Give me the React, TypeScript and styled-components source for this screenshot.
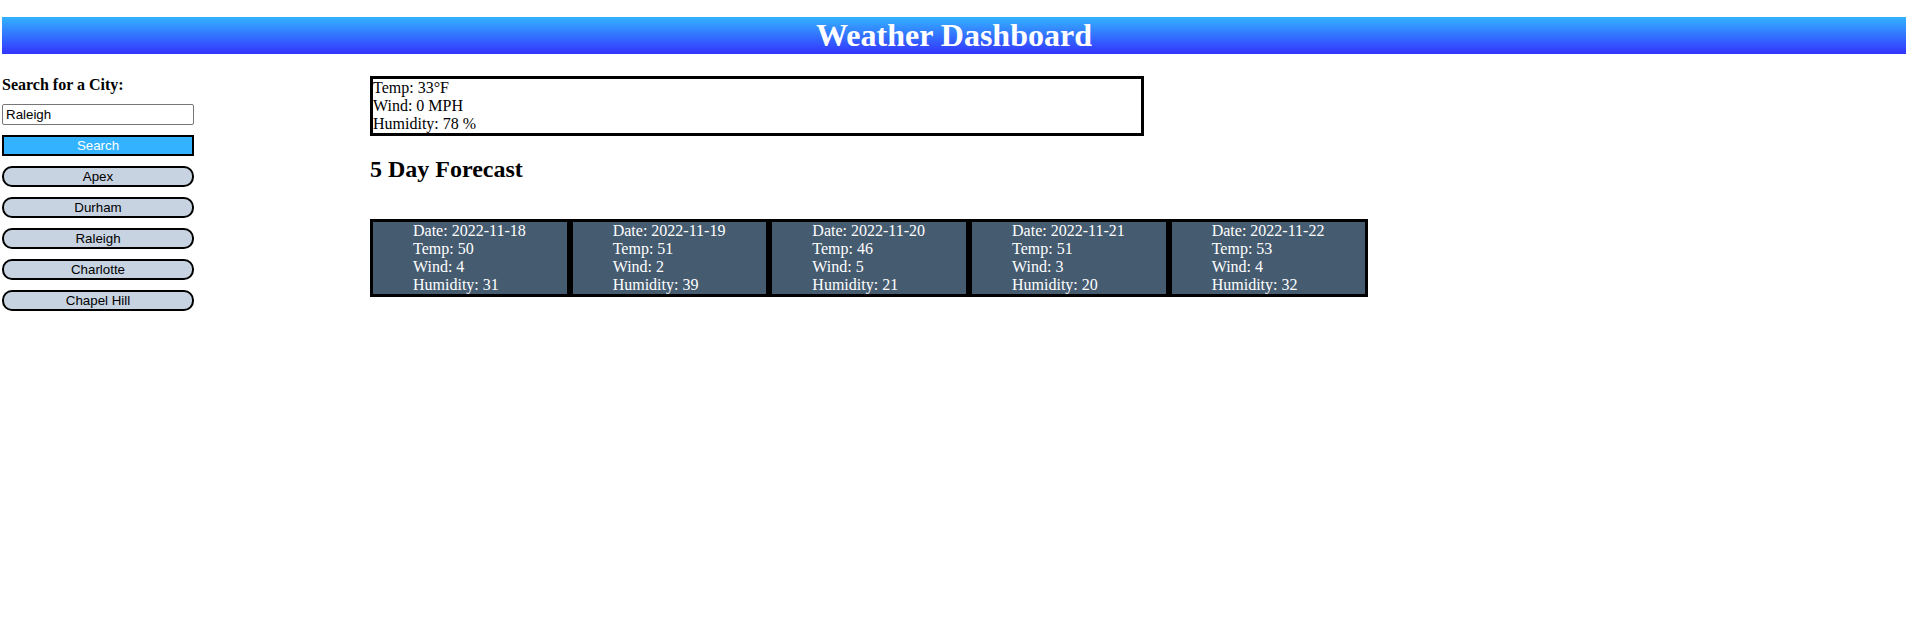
import React, { useState } from "react";
import styled, { createGlobalStyle } from "styled-components";

const GlobalStyle = createGlobalStyle`
  * {
    box-sizing: border-box;
  }
  body {
    margin: 17px 6px 0 2px;
    background: #ffffff;
    color: #000000;
    font: 16px/18px "Liberation Serif", "Times New Roman", serif;
  }
`;

const Title = styled.h1`
  margin: 0;
  font-size: 32px;
  line-height: 37px;
  text-align: center;
  color: #ffffff;
  background: linear-gradient(#33b3ff, #3333ff);
`;

const Columns = styled.div`
  display: grid;
  grid-template-columns: 192px 1fr;
  column-gap: 176px;
  align-items: start;
  margin-top: 22px;
`;

const SearchForm = styled.form`
  display: grid;
  gap: 10px;
`;

const SearchLabel = styled.label`
  font-weight: bold;
`;

const CityInput = styled.input`
  width: 100%;
  height: 21px;
  padding: 1px 3px;
  border: 1px solid #767676;
  border-radius: 2px;
  font-family: "Liberation Sans", Arial, sans-serif;
`;

const CityButton = styled.button<{ $primary?: boolean }>`
  height: 21px;
  padding: 0 6px;
  border: 2px solid #000000;
  border-radius: ${(p) => (p.$primary ? "0" : "10px")};
  background: ${(p) => (p.$primary ? "#33b3ff" : "#c7d3e1")};
  color: ${(p) => (p.$primary ? "#ffffff" : "#000000")};
  font-family: "Liberation Sans", Arial, sans-serif;
  cursor: pointer;
`;

const CurrentWeather = styled.section`
  width: calc(50% + 6px);
  border: 3px solid #000000;
`;

const Line = styled.p`
  margin: 0;
`;

const ForecastHeading = styled.h2`
  margin: 20px 0 36px;
  font-size: 24px;
  line-height: 27px;
`;

const ForecastRow = styled.section`
  display: grid;
  grid-template-columns: repeat(5, 1fr);
  width: 65%;
`;

const DayCard = styled.ul`
  margin: 0;
  padding: 0 0 0 40px;
  border: 3px solid #000000;
  background: #455b70;
  color: #ffffff;
  list-style: none;
`;

const cities = ["Apex", "Durham", "Raleigh", "Charlotte", "Chapel Hill"];

const forecast = [
  { date: "2022-11-18", temp: 50, wind: 4, humidity: 31 },
  { date: "2022-11-19", temp: 51, wind: 2, humidity: 39 },
  { date: "2022-11-20", temp: 46, wind: 5, humidity: 21 },
  { date: "2022-11-21", temp: 51, wind: 3, humidity: 20 },
  { date: "2022-11-22", temp: 53, wind: 4, humidity: 32 },
];

export default function App() {
  const [city, setCity] = useState("Raleigh");

  return (
    <>
      <GlobalStyle />
      <header>
        <Title>Weather Dashboard</Title>
      </header>
      <Columns>
        <SearchForm onSubmit={(e) => e.preventDefault()}>
          <SearchLabel htmlFor="city">Search for a City:</SearchLabel>
          <CityInput
            id="city"
            type="text"
            value={city}
            onChange={(e) => setCity(e.target.value)}
          />
          <CityButton type="submit" $primary>
            Search
          </CityButton>
          {cities.map((name) => (
            <CityButton key={name} type="button" onClick={() => setCity(name)}>
              {name}
            </CityButton>
          ))}
        </SearchForm>
        <main>
          <CurrentWeather>
            <Line>Temp: 33°F</Line>
            <Line>Wind: 0 MPH</Line>
            <Line>Humidity: 78 %</Line>
          </CurrentWeather>
          <ForecastHeading>5 Day Forecast</ForecastHeading>
          <ForecastRow>
            {forecast.map((day) => (
              <DayCard key={day.date}>
                <li>Date: {day.date}</li>
                <li>Temp: {day.temp}</li>
                <li>Wind: {day.wind}</li>
                <li>Humidity: {day.humidity}</li>
              </DayCard>
            ))}
          </ForecastRow>
        </main>
      </Columns>
    </>
  );
}
